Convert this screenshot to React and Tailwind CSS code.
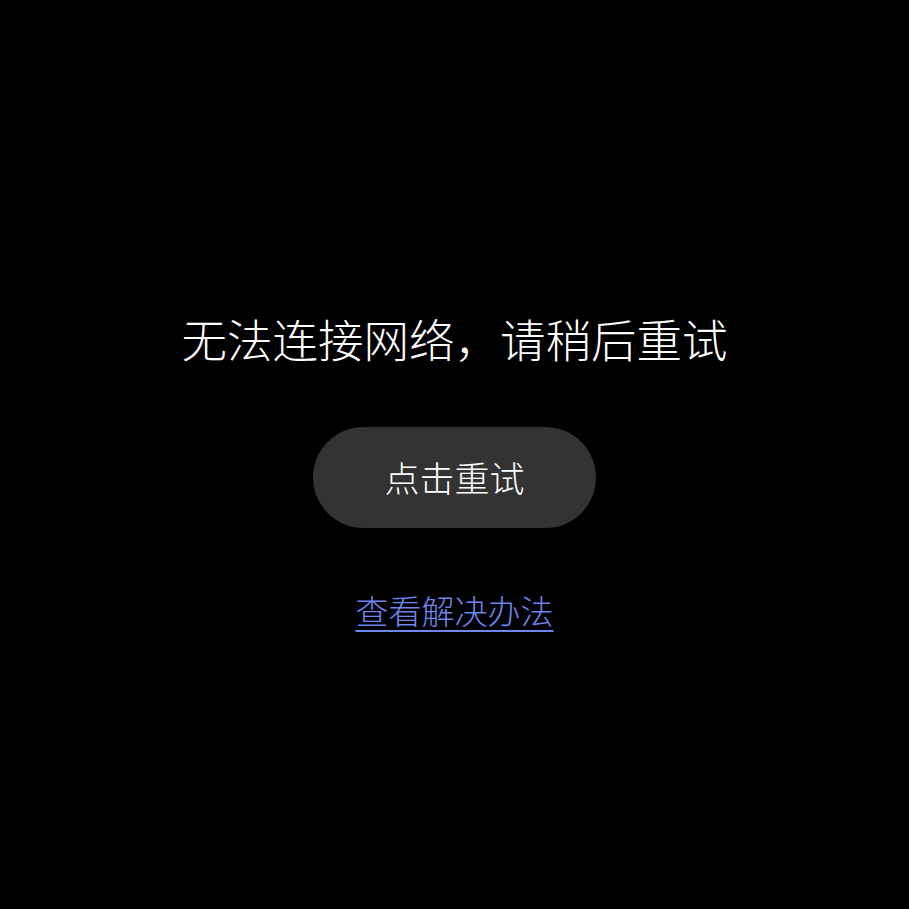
export default function App() {
  return (
    <div
      className="min-h-[909px] w-full bg-black flex flex-col items-center pt-[308px]"
      style={{ fontFamily: '"Noto Sans CJK SC", "Noto Sans", sans-serif' }}
    >
      <h1 className="text-[45.5px] leading-[60px] font-light text-white">
        无法连接网络，请稍后重试
      </h1>
      <button className="mt-[59px] w-[283px] h-[101px] rounded-full bg-[#333333] text-[35px] font-light text-white">
        点击重试
      </button>
      <a
        href="#"
        className="mt-[60px] text-[33px] leading-[44px] font-light text-[#6f85ee] underline underline-offset-[6px] decoration-2"
      >
        查看解决办法
      </a>
    </div>
  );
}
